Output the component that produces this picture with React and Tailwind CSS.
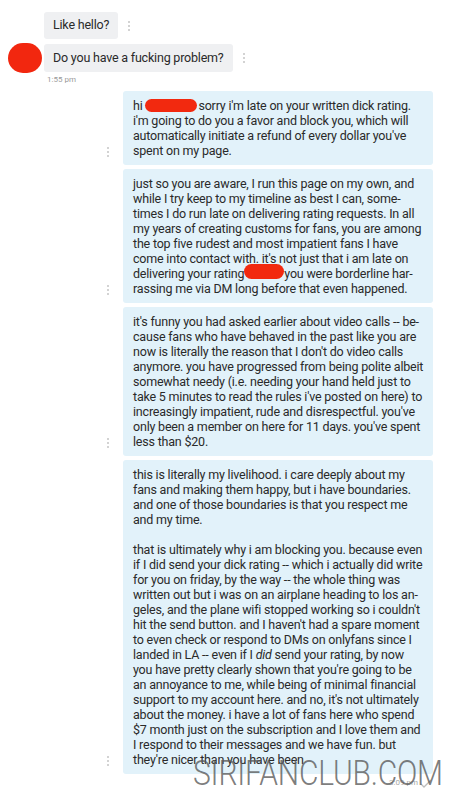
import React from "react";

const Dots = ({ className = "" }) => (
  <div className={"flex flex-col items-center gap-[2px] " + className}>
    <span className="block w-[2px] h-[2px] rounded-full bg-[#c4c4c4]" />
    <span className="block w-[2px] h-[2px] rounded-full bg-[#c4c4c4]" />
    <span className="block w-[2px] h-[2px] rounded-full bg-[#c4c4c4]" />
  </div>
);

const Blob = ({ w, h, className = "" }) => (
  <span
    className={"inline-block align-middle rounded-full bg-[#f2290f] " + className}
    style={{ width: w, height: h }}
  />
);

const L = ({ children }) => <div className="whitespace-nowrap">{children}</div>;

const Right = ({ lines }) => (
  <div className="flex items-end pl-[106px]">
    <Dots className="w-[4px] mb-[8px]" />
    <div className="ml-[13px] w-[310px] bg-[#e2f2fa] rounded-[3px] px-[10px] py-[7px] text-[12.5px] leading-[15px] tracking-[-0.2px] text-[#2a2a2a]">
      {lines.map((l, i) => (
        <L key={i}>{l === "" ? "\u00a0" : l}</L>
      ))}
    </div>
  </div>
);

export default function App() {
  const b1 = [
    <>
      hi <Blob w={52} h={13} className="-mt-[3px] mr-[1px]" />sorry i'm late on your written dick rating.
    </>,
    "i'm going to do you a favor and block you, which will",
    "automatically initiate a refund of every dollar you've",
    "spent on my page.",
  ];
  const b2 = [
    "just so you are aware, I run this page on my own, and",
    "while I try keep to my timeline as best I can, some-",
    "times I do run late on delivering rating requests. In all",
    "my years of creating customs for fans, you are among",
    "the top five rudest and most impatient fans I have",
    "come into contact with. it's not just that i am late on",
    <>
      delivering your rating<Blob w={40} h={15} className="-mt-[6px]" />you were borderline har-
    </>,
    "rassing me via DM long before that even happened.",
  ];
  const b3 = [
    "it's funny you had asked earlier about video calls -- be-",
    "cause fans who have behaved in the past like you are",
    "now is literally the reason that I don't do video calls",
    "anymore. you have progressed from being polite albeit",
    "somewhat needy (i.e. needing your hand held just to",
    "take 5 minutes to read the rules i've posted on here) to",
    "increasingly impatient, rude and disrespectful. you've",
    "only been a member on here for 11 days. you've spent",
    "less than $20.",
  ];
  const b4 = [
    "this is literally my livelihood. i care deeply about my",
    "fans and making them happy, but i have boundaries.",
    "and one of those boundaries is that you respect me",
    "and my time.",
    "",
    "that is ultimately why i am blocking you. because even",
    "if I did send your dick rating -- which i actually did write",
    "for you on friday, by the way -- the whole thing was",
    "written out but i was on an airplane heading to los an-",
    "geles, and the plane wifi stopped working so i couldn't",
    "hit the send button. and I haven't had a spare moment",
    "to even check or respond to DMs on onlyfans since I",
    <>
      landed in LA -- even if I <i>did</i> send your rating, by now
    </>,
    "you have pretty clearly shown that you're going to be",
    "an annoyance to me, while being of minimal financial",
    "support to my account here. and no, it's not ultimately",
    "about the money. i have a lot of fans here who spend",
    "$7 month just on the subscription and I love them and",
    "I respond to their messages and we have fun. but",
    "they're nicer than you have been",
  ];

  return (
    <div className="relative w-[449px] h-[800px] overflow-hidden bg-white font-['Roboto',sans-serif]">
      <div className="pt-[12px]">
        <div className="flex items-center pl-[44px]">
          <div className="h-[27px] flex items-center px-[9px] bg-[#eff0f2] rounded-[3px] text-[12.5px] tracking-[-0.2px] text-[#2a2a2a]">
            Like hello?
          </div>
          <Dots className="ml-[10px]" />
        </div>
        <div className="flex items-center mt-[4px]">
          <div className="ml-[8px] w-[34px] h-[30px] rounded-full bg-[#f2270f]" />
          <div className="ml-[2px] h-[28px] flex items-center px-[9px] bg-[#eff0f2] rounded-[3px] text-[12.5px] tracking-[-0.2px] text-[#2a2a2a]">
            Do you have a fucking problem?
          </div>
          <Dots className="ml-[10px]" />
        </div>
        <div className="pl-[47px] mt-[2px] text-[8px] leading-[10px] text-[#9a9a9a]">1:55 pm</div>

        <div className="mt-[6px] flex flex-col gap-[4px]">
          <Right lines={b1} />
          <Right lines={b2} />
          <Right lines={b3} />
          <Right lines={b4} />
        </div>

        <div className="flex items-center justify-end pr-[17px] mt-[4px] text-[8px] leading-[10px] text-[#a8a8a8]">
          <span>3:09 pm</span>
          <svg width="12" height="9" viewBox="0 0 12 9" className="ml-[2px]">
            <path d="M1 5 L4 8 L11 1" fill="none" stroke="#bdbdbd" strokeWidth="1.3" />
          </svg>
        </div>
      </div>

      <div className="absolute left-[193px] top-[753px] origin-top-left scale-y-[1.15] text-[30px] leading-[36px] font-light tracking-[-0.2px] text-[#5a5a5a]/80 font-['Roboto',sans-serif] whitespace-nowrap">
        SIRIFANCLUB.COM
      </div>
    </div>
  );
}
